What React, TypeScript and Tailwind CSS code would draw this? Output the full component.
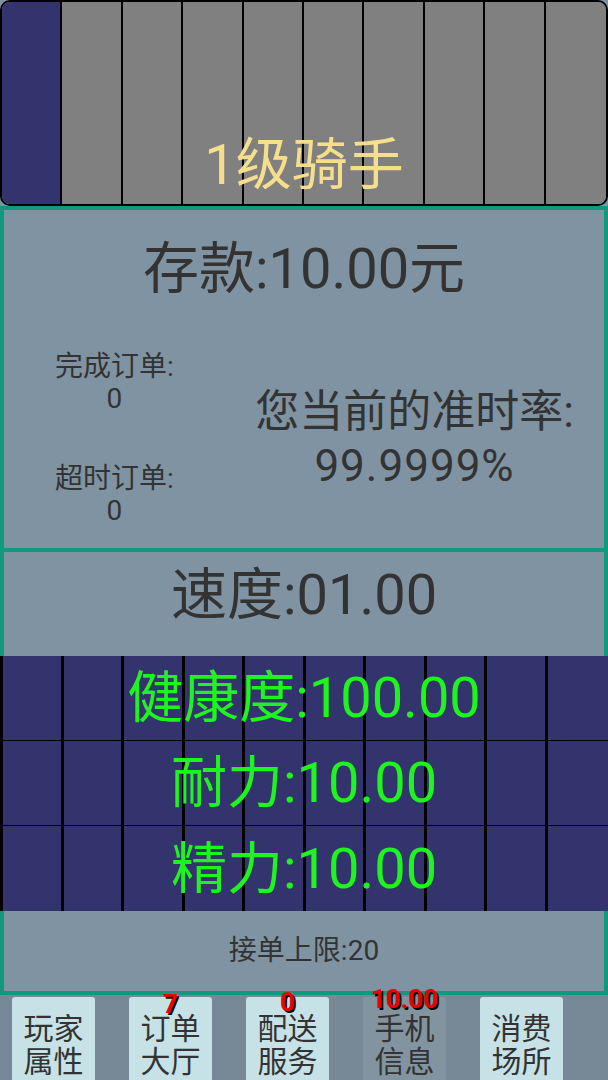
const NAVY = 'bg-[#33336e]';

const cells = Array.from({ length: 10 }, (_, i) => i);

function LevelBar() {
  // 1 of 10 cells filled
  return (
    <div className="grid h-[206px] overflow-hidden rounded-[10px] border-2 border-black">
      <div className="col-start-1 row-start-1 grid grid-cols-10">
        {cells.map((i) => (
          <div
            key={i}
            className={`${i === 0 ? NAVY : 'bg-[#808080]'} ${i < 9 ? 'border-r-2 border-black' : ''}`}
          />
        ))}
      </div>
      <div className="col-start-1 row-start-1 flex items-end justify-center pb-[5px]">
        <span className="text-[56px] leading-[1.2] text-[#f6df8c]">1级骑手</span>
      </div>
    </div>
  );
}

function StatRow({ label, value }: { label: string; value: string }) {
  return (
    <div className="grid h-[85px] border-b border-black last:border-b-0">
      <div className="col-start-1 row-start-1 grid grid-cols-10 border-l-[3px] border-black">
        {cells.map((i) => (
          <div key={i} className={`${NAVY} ${i < 9 ? 'border-r-[3px] border-black' : ''}`} />
        ))}
      </div>
      <div className="col-start-1 row-start-1 flex items-center justify-center">
        <span className="text-[56px] leading-none text-[#1ef51e]">
          {label}:{value}
        </span>
      </div>
    </div>
  );
}

function NavButton({
  top,
  bottom,
  badge,
  badgeTop = '-top-[9px]',
  active,
}: {
  top: string;
  bottom: string;
  badge?: string;
  badgeTop?: string;
  active?: boolean;
}) {
  return (
    <div
      className={`relative flex h-[83px] w-[83px] flex-col items-center rounded-t-[3px] pt-[15px] text-[30px] leading-[33px] text-[#333] ${
        active ? 'bg-[#82949f]' : 'bg-[#c6e2e7]'
      }`}
    >
      <span>{top}</span>
      <span>{bottom}</span>
      {badge && (
        <span
          className={`absolute ${badgeTop} left-1/2 -translate-x-1/2 text-[26px] font-bold leading-none text-[#ee0000] [text-shadow:2px_2px_0_#000]`}
        >
          {badge}
        </span>
      )}
    </div>
  );
}

export default function App() {
  return (
    <div className="flex h-[1080px] w-[608px] flex-col overflow-hidden bg-[#7f93a2] font-['Roboto','Noto_Sans_CJK_SC',sans-serif]">
      <LevelBar />

      {/* Deposit + order stats */}
      <div className="flex h-[347px] flex-col border-4 border-[#12997d] text-[#333]">
        <div className="flex h-[118px] items-center justify-center">
          <span className="text-[56px] leading-none">存款:10.00元</span>
        </div>
        <div className="flex flex-1 items-center pt-[2px]">
          <div className="flex w-[221px] flex-col items-center gap-[48px] text-[28px] leading-[32px]">
            <div className="flex flex-col items-center">
              <span>完成订单:</span>
              <span>0</span>
            </div>
            <div className="flex flex-col items-center">
              <span>超时订单:</span>
              <span>0</span>
            </div>
          </div>
          <div className="flex flex-1 flex-col items-center text-[44px] leading-[54px]">
            <span>您当前的准时率:</span>
            <span className="tracking-[1px]">99.9999%</span>
          </div>
        </div>
      </div>

      {/* Speed */}
      <div className="flex h-[104px] justify-center border-x-4 border-[#12997d] pt-[10px] text-[#333]">
        <span className="text-[56px] leading-[1.2]">速度:01.00</span>
      </div>

      <div className="flex flex-col">
        <StatRow label="健康度" value="100.00" />
        <StatRow label="耐力" value="10.00" />
        <StatRow label="精力" value="10.00" />
      </div>

      {/* Order limit */}
      <div className="flex h-[84px] items-center justify-center border-x-4 border-b-4 border-[#12997d] text-[28px] text-[#333]">
        接单上限:20
      </div>

      {/* Bottom navigation */}
      <div className="flex flex-1 items-start gap-[34px] bg-[#778997] pl-[12px] pt-[2px]">
        <NavButton top="玩家" bottom="属性" />
        <NavButton top="订单" bottom="大厅" badge="7" badgeTop="-top-[6px]" />
        <NavButton top="配送" bottom="服务" badge="0" badgeTop="-top-[8px]" />
        <NavButton top="手机" bottom="信息" badge="10.00" badgeTop="-top-[11px]" active />
        <NavButton top="消费" bottom="场所" />
      </div>
    </div>
  );
}
